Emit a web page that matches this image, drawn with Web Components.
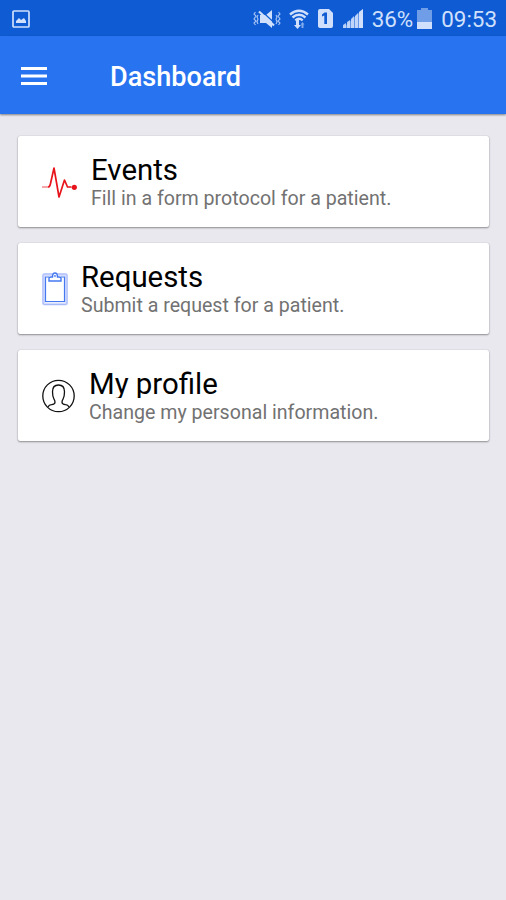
<!DOCTYPE html>
<html lang="en">
<head>
<meta charset="utf-8">
<title>Dashboard</title>
<style>
  html, body {
    margin: 0;
    height: 100%;
  }
  body {
    background: #e8e8ee;
    font-family: Roboto, "Liberation Sans", sans-serif;
    overflow: hidden;
  }
</style>
</head>
<body>
<dashboard-page></dashboard-page>

<script>
// Android status bar
class StatusBar extends HTMLElement {
  constructor() {
    super();
    this.attachShadow({ mode: "open" });
    this.shadowRoot.innerHTML = `
      <style>
        :host {
          display: flex;
          align-items: center;
          box-sizing: border-box;
          height: 36px;
          padding: 1px 9px 0 12px;
          background: #0f5bd3;
          color: #d0e0fc;
          font-size: 22.4px;
          line-height: 36px;
        }
        svg { display: block; flex: none; fill: currentColor; }
        .space { flex: 1; }
        .mute { margin-right: 8px; }
        .wifi { margin-right: 9px; }
        .sim { margin-right: 10px; }
        .signal { margin-right: 9px; }
        .battery { margin: 0 9px 0 4px; }
      </style>
      <svg width="18" height="18" viewBox="0 0 18 18">
        <rect x="1" y="1" width="16" height="16" rx="1" fill="none" stroke="currentColor" stroke-width="1.7"/>
        <path d="M4 13V11l3-3 2 2 3-2 2 3v2z"/>
      </svg>
      <span class="space"></span>
      <svg class="mute" width="28" height="20" viewBox="0 0 28 20">
        <path d="M7 6h6l6-5v18l-6-5H7z"/>
        <path d="M8 1.500l14 13" fill="none" stroke="#0f5bd3" stroke-width="1.200"/>
        <path d="M6 2.500l15 14" fill="none" stroke="currentColor" stroke-width="2.200"/>
        <path d="M2.500 3l-1.500 2 2 2-2 3 2 2-2 2 1.500 2M5 6l-1 2 1 2-1 3 1 2M25.500 3l1.500 2-2 2 2 3-2 2 2 2-1.500 2M23 6l1 2-1 2 1 3-1 2" fill="none" stroke="currentColor" stroke-width="1.100" opacity=".8"/>
      </svg>
      <svg class="wifi" width="20" height="20" viewBox="0 0 20 20">
        <path d="M1 5.500q9-7.500 18 0M3.500 8.500q6.500-5.500 13 0M6.300 11.300q3.700-3 7.400 0" fill="none" stroke="currentColor" stroke-width="2.300"/>
        <path d="M7 11h3v5h2l-3.500 4L5 16h2z"/>
        <path d="M13.500 13l2 2.500h-1V19h-2v-3.500h-1z" opacity=".6"/>
      </svg>
      <svg class="sim" width="15" height="19" viewBox="0 0 15 19">
        <path fill-rule="evenodd" d="M2 0h9l4 4v13q0 2-2 2H2q-2 0-2-2V2q0-2 2-2zM8.500 3.500h-2L4 5.500v2l2.300-1V15H9V3.500z"/>
      </svg>
      <svg class="signal" width="20" height="19" viewBox="0 0 20 19">
        <path d="M0 19v-3l3-2v5zM4 19v-6l3-2v8zM8 19v-9l3-3v12zM12 19V7l3-3v15z" opacity=".85"/>
        <path d="M16 19V3l4-3v19z"/>
        <path d="M0 19L20 0v19z" opacity=".45"/>
      </svg>
      <span>36%</span>
      <svg class="battery" width="15" height="21" viewBox="0 0 15 21">
        <path d="M4 0h7v2h4v12H0V2h4z" opacity=".5"/>
        <path d="M0 14h15v7H0z"/>
      </svg>
      <span class="clock">09:53</span>
    `;
  }
}
customElements.define("status-bar", StatusBar);

// Toolbar with the menu button, the title is slotted
class AppBar extends HTMLElement {
  constructor() {
    super();
    this.attachShadow({ mode: "open" });
    this.shadowRoot.innerHTML = `
      <style>
        :host {
          display: flex;
          align-items: center;
          box-sizing: border-box;
          height: 78px;
          padding: 2px 21px 0;
          background: #2874f0;
          color: #fff;
          box-shadow: 0 1px 2px rgba(0, 0, 0, 0.45);
        }
        .menu {
          display: block;
          margin-right: 63px;
        }
        h1 {
          margin: 0;
          padding-top: 2px;
          font-size: 27.1px;
          font-weight: 500;
          line-height: 32px;
        }
      </style>
      <svg class="menu" width="26" height="18" viewBox="0 0 26 18" fill="#fff">
        <path d="M0 0h26v3H0zM0 7.500h26v3H0zM0 15h26v3H0z"/>
      </svg>
      <h1><slot></slot></h1>
    `;
  }
}
customElements.define("app-bar", AppBar);

// Card with an icon, a title and one line of text
class MenuCard extends HTMLElement {
  constructor() {
    super();
    this.attachShadow({ mode: "open" });
    this.shadowRoot.innerHTML = `
      <style>
        :host {
          display: flex;
          align-items: center;
          box-sizing: border-box;
          height: 91px;
          padding: 0 24px;
          border-radius: 2px;
          background: #fff;
          box-shadow: 0 1px 2px rgba(0, 0, 0, 0.38), 0 0 1px rgba(0, 0, 0, 0.25);
        }
        .text {
          display: flex;
          flex-direction: column;
          padding-top: 5px;
        }
        /* line box is shorter than the glyphs, so descenders get cut */
        .title {
          height: 28px;
          overflow: hidden;
          color: #000;
          font-size: 29.4px;
          line-height: 29px;
          white-space: nowrap;
        }
        .note {
          padding-top: 1px;
          color: #727272;
          font-size: 19.6px;
          line-height: 28px;
          white-space: nowrap;
        }
        ::slotted(svg) { display: block; flex: none; }
      </style>
      <slot name="icon"></slot>
      <div class="text">
        <div class="title"><slot name="title"></slot></div>
        <div class="note"><slot></slot></div>
      </div>
    `;
  }
}
customElements.define("menu-card", MenuCard);

class DashboardPage extends HTMLElement {
  constructor() {
    super();
    this.attachShadow({ mode: "open" });
    this.shadowRoot.innerHTML = `
      <style>
        :host { display: block; }
        main {
          display: flex;
          flex-direction: column;
          gap: 16px;
          padding: 22px 17px 0 18px;
        }
        .pulse { margin-right: 14px; }
        .clipboard { margin-right: 13px; }
        .person { margin-right: 14px; }
      </style>
      <status-bar></status-bar>
      <app-bar>Dashboard</app-bar>
      <main>
        <menu-card>
          <svg slot="icon" class="pulse" width="35" height="34" viewBox="0 0 35 34" fill="none" stroke="#e8141c">
            <path d="M0 22h6" stroke-width="1.400" opacity=".55"/>
            <path d="M6 22q1.800 0 2.400-3L12 3l5 29 5.500-17 3 7h4" stroke-width="1.700" stroke-linejoin="round"/>
            <circle cx="32.300" cy="22.300" r="2.600" fill="#e8141c" stroke="none"/>
          </svg>
          <span slot="title">Events</span>
          Fill in a form protocol for a patient.
        </menu-card>
        <menu-card>
          <svg slot="icon" class="clipboard" width="26" height="34" viewBox="0 0 26 34" fill="none" stroke="#4478f0">
            <rect x="1.500" y="2.500" width="23" height="29.500" rx="1" stroke-width="3" stroke="#d3dcfd"/>
            <rect x="1" y="2" width="24" height="30.500" rx="1.500" stroke-width=".8" stroke="#9db3f8"/>
            <path d="M7 5H3.500v24.500h19V5H19" stroke-width="1.200"/>
            <path d="M7 9V6.500q0-1.500 2-1.500h1.500q0-4 2.500-4t2.500 4H17q2 0 2 1.500V9z" stroke-width="1.400" fill="#fff"/>
            <circle cx="13" cy="4" r=".8" stroke-width=".8"/>
          </svg>
          <span slot="title">Requests</span>
          Submit a request for a patient.
        </menu-card>
        <menu-card>
          <svg slot="icon" class="person" width="33" height="34" viewBox="0 0 33 34" fill="none" stroke="#111" stroke-width="1.300">
            <circle cx="16.500" cy="17" r="15.700"/>
            <path d="M6 28q1-2 3.500-2.300 3.500-.5 3.500-2.500 0-1.500-1-3-1.500-2.500-1.500-7.500 0-6.700 6-6.700t6 6.700q0 5-1.500 7.500-1 1.500-1 3 0 2 3.500 2.500 2.500.3 3.500 2.300"/>
          </svg>
          <span slot="title">My profile</span>
          Change my personal information.
        </menu-card>
      </main>
    `;
  }
}
customElements.define("dashboard-page", DashboardPage);
</script>
</body>
</html>
